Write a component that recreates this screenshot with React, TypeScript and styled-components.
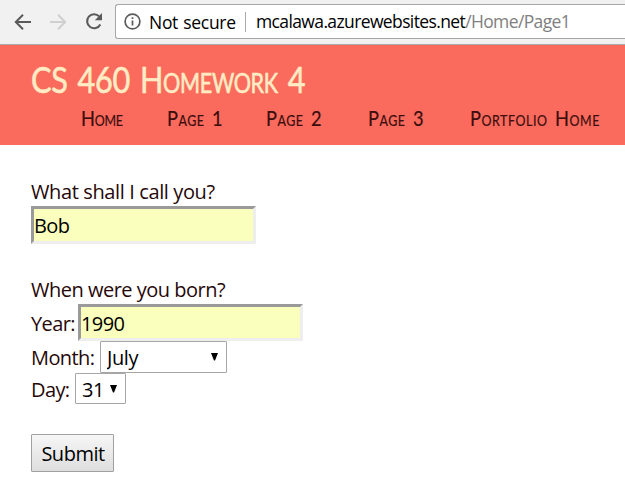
import React from 'react';
import styled, { createGlobalStyle } from 'styled-components';

const GlobalStyle = createGlobalStyle`
  * { box-sizing: border-box; }
  body { margin: 0; background: #fff; overflow: hidden; }
`;

const Page = styled.div`
  height: 478px;
  overflow: hidden;
  color: #260808;
  font: 20px/28px "Open Sans", "Noto Sans", sans-serif;
`;

const Toolbar = styled.div`
  display: flex;
  align-items: center;
  height: 45px;
  padding: 0 0 1px 14px;
  background: #f1f1f1;
  border-bottom: 1px solid #a9a9a9;
`;

const Icon = styled.svg<{ $gap: number }>`
  flex: none;
  margin-right: ${p => p.$gap}px;
  fill: none;
`;

const AddressBar = styled.div`
  display: flex;
  align-items: center;
  flex: 1;
  height: 35px;
  padding-left: 8px;
  background: #fff;
  border: 1px solid #a6a6a6;
  border-right: 0;
  border-radius: 3px 0 0 3px;
  color: #000;
  font-size: 17.5px;
  line-height: 32px;
  white-space: nowrap;
`;

const Security = styled.span`
  width: 96px;
  letter-spacing: -0.3px;
  word-spacing: 1px;
`;

const Url = styled.span`
  height: 20px;
  padding-left: 10px;
  border-left: 1px solid #aaa;
  line-height: 19px;
  letter-spacing: -0.62px;
`;

const Path = styled.span`
  color: #808080;
`;

const Header = styled.header`
  height: 100px;
  padding: 13px 0 0 31px;
  background: #fa6b5d;
  font-family: Lato, sans-serif;
  font-variant: small-caps;
  white-space: nowrap;
`;

const Title = styled.h1`
  width: max-content;
  margin: 0;
  color: #ffebc4;
  font-size: 37px;
  font-weight: 400;
  line-height: 41px;
  letter-spacing: -0.4px;
  word-spacing: 3px;
  -webkit-text-stroke: 0.6px #ffebc4;
  transform: scaleX(0.83);
  transform-origin: left;
`;

const Nav = styled.nav`
  display: flex;
  padding-left: 50px;
`;

const NavLink = styled.a<{ $width: number; $spacing: number }>`
  width: ${p => p.$width}px;
  color: #3b0d0d;
  font-size: 22px;
  line-height: 37px;
  letter-spacing: ${p => p.$spacing}px;
  word-spacing: 3px;
  -webkit-text-stroke: 0.2px #3b0d0d;
  transform: scaleX(0.83);
  transform-origin: left;
`;

const Form = styled.form`
  display: flex;
  flex-direction: column;
  align-items: flex-start;
  padding: 33px 0 0 31px;
`;

const Question = styled.div<{ $top?: number; $spacing: number }>`
  height: 28px;
  margin-top: ${p => p.$top ?? 0}px;
  letter-spacing: ${p => p.$spacing}px;
`;

const Row = styled.div<{ $height: number }>`
  display: flex;
  align-items: center;
  height: ${p => p.$height}px;
`;

const Label = styled.label<{ $width: number }>`
  width: ${p => p.$width}px;
  padding-top: 2px;
  letter-spacing: -0.6px;
  white-space: nowrap;
`;

const TextInput = styled.input<{ $height: number }>`
  width: 225px;
  height: ${p => p.$height}px;
  padding: 1px 0 0;
  background: #faffbd;
  border: 3px solid;
  border-color: #9a9a9a #eee #eee #9a9a9a;
  border-radius: 0;
  outline: 0;
  color: #000;
  font: inherit;
  letter-spacing: -0.6px;
`;

const SelectBox = styled.div<{ $width: number; $arrow: number }>`
  display: flex;
  align-items: center;
  width: ${p => p.$width}px;
  height: 100%;
  padding-right: ${p => p.$arrow}px;
  background: #fff;
  border: 1px solid #a6a6a6;
  border-radius: 1px;
`;

const Select = styled.select`
  flex: 1;
  min-width: 0;
  height: 30px;
  padding: 2px 0 0 6px;
  appearance: none;
  background: transparent;
  border: 0;
  color: #000;
  font: inherit;
  letter-spacing: -0.4px;
`;

const Submit = styled.button`
  width: 83px;
  height: 38px;
  margin-top: 30px;
  padding: 2px 0 0 1px;
  background: linear-gradient(#f6f6f6, #dedede);
  border: 1px solid #a0a0a0;
  border-radius: 1px;
  color: #000;
  font: inherit;
  letter-spacing: -0.5px;
`;

const Arrow = () => (
  <Icon $gap={0} width="7" height="8" viewBox="0 0 7 8">
    <path d="M0 0h7L4 7.5H3z" fill="#000" />
  </Icon>
);

const links = [
  { text: 'Home', width: 86, spacing: -0.3 },
  { text: 'Page 1', width: 99, spacing: 0.6 },
  { text: 'Page 2', width: 102, spacing: 0.6 },
  { text: 'Page 3', width: 102, spacing: 0.6 },
  { text: 'Portfolio Home', width: 150, spacing: 0.65 },
];

export default function App() {
  return (
    <Page>
      <GlobalStyle />
      <Toolbar>
        <Icon $gap={18} width="18" height="18" viewBox="0 0 18 18" stroke="#5a5a5a" strokeWidth="2">
          <path d="M17 9H2.5M9 1.8 1.8 9 9 16.2" />
        </Icon>
        <Icon $gap={17} width="18" height="18" viewBox="0 0 18 18" stroke="#d0d0d0" strokeWidth="2">
          <path d="M0 9h15M8 1.8 15.2 9 8 16.2" />
        </Icon>
        <Icon $gap={12} width="18" height="18" viewBox="0 0 18 18">
          <path d="M14.2 3.4A7 7 0 1 0 15.3 11.5" stroke="#5a5a5a" strokeWidth="2.1" />
          <path d="M17 0v7.2H9.8z" fill="#5a5a5a" />
        </Icon>
        <AddressBar>
          <Icon $gap={8} width="17" height="17" viewBox="0 0 17 17" stroke="#5a5a5a">
            <circle cx="8.5" cy="8.5" r="7.4" strokeWidth="1.7" />
            <path d="M8.5 7.5v5M8.5 4.3v1.8" strokeWidth="1.7" />
          </Icon>
          <Security>Not secure</Security>
          <Url>mcalawa.azurewebsites.net<Path>/Home/Page1</Path></Url>
        </AddressBar>
      </Toolbar>
      <Header>
        <Title>CS 460 Homework 4</Title>
        <Nav>
          {links.map(l => <NavLink key={l.text} $width={l.width} $spacing={l.spacing}>{l.text}</NavLink>)}
        </Nav>
      </Header>
      <Form>
        <Question $spacing={-0.38}>What shall I call you?</Question>
        <TextInput $height={38} defaultValue="Bob" />
        <Question $top={32} $spacing={-0.5}>When were you born?</Question>
        <Row $height={37}>
          <Label $width={47}>Year:</Label>
          <TextInput $height={37} defaultValue="1990" />
        </Row>
        <Row $height={32}>
          <Label $width={69}>Month:</Label>
          <SelectBox $width={127} $arrow={8}>
            <Select defaultValue="July"><option>July</option></Select>
            <Arrow />
          </SelectBox>
        </Row>
        <Row $height={31}>
          <Label $width={44}>Day:</Label>
          <SelectBox $width={51} $arrow={8}>
            <Select defaultValue="31"><option>31</option></Select>
            <Arrow />
          </SelectBox>
        </Row>
        <Submit type="button">Submit</Submit>
      </Form>
    </Page>
  );
}
